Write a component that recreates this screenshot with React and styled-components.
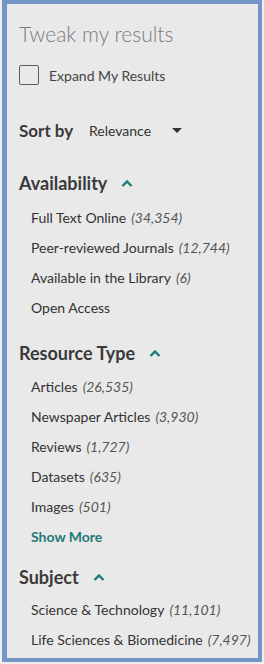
import React from 'react'
import styled, { createGlobalStyle } from 'styled-components'

const Global = createGlobalStyle`
  html, body {
    margin: 0;
    padding: 0;
    background: #efefef;
  }
  body {
    font-family: Lato, "Open Sans", "Liberation Sans", sans-serif;
  }
`

const Panel = styled.aside`
  box-sizing: border-box;
  width: 260px;
  height: 662px;
  margin-left: 2px;
  background: #e9e9e9;
  border: 4px solid #7396c4;
  border-left-width: 5px;
  padding: 17px 0 0 12px;
  overflow: hidden;
`

const Title = styled.h2`
  margin: 0;
  font-size: 21px;
  font-weight: 300;
  color: #7b7b7b;
  line-height: 26px;
`

const CheckRow = styled.label`
  display: flex;
  align-items: center;
  gap: 10px;
  margin-top: 18px;
  font-size: 14px;
  color: #444;
`

const Box = styled.span`
  box-sizing: border-box;
  width: 20px;
  height: 20px;
  border: 1px solid #5e5e5e;
  border-radius: 2px;
`

const SortRow = styled.div`
  display: flex;
  align-items: center;
  margin-top: 33px;
  height: 24px;
`

const SortLabel = styled.span`
  font-size: 17px;
  font-weight: 700;
  color: #3a3a3a;
  width: 70px;
`

const SortValue = styled.span`
  font-size: 14px;
  color: #333;
  width: 83px;
`

const Caret = styled.span`
  width: 0;
  height: 0;
  border-left: 5px solid transparent;
  border-right: 5px solid transparent;
  border-top: 5px solid #333;
`

const Section = styled.section`
  margin-top: ${p => p.$gap}px;
`

const Heading = styled.div`
  display: flex;
  align-items: center;
  gap: 14px;
  height: 24px;
  font-size: 18px;
  font-weight: 700;
  color: #3a3a3a;
`

const List = styled.ul`
  list-style: none;
  margin: ${p => p.$top}px 0 0;
  padding: 0 0 0 12px;
`

const Item = styled.li`
  height: 30px;
  display: flex;
  align-items: center;
  font-size: 14px;
  color: #333;
`

const Count = styled.span`
  font-style: italic;
  color: #555;
  margin-left: 5px;
`

const More = styled(Item)`
  color: #1f7a78;
  font-weight: 700;
`

const Chevron = () => (
  <svg width="12" height="9" viewBox="0 0 12 9">
    <path d="M1.5 7 L6 2.5 L10.5 7" fill="none" stroke="#1f7a78" strokeWidth="2.4" />
  </svg>
)

const facets = [
  {
    name: 'Availability',
    gap: 29,
    top: 7,
    items: [
      ['Full Text Online', '34,354'],
      ['Peer-reviewed Journals', '12,744'],
      ['Available in the Library', '6'],
      ['Open Access'],
    ],
  },
  {
    name: 'Resource Type',
    gap: 19,
    top: 6,
    more: true,
    items: [
      ['Articles', '26,535'],
      ['Newspaper Articles', '3,930'],
      ['Reviews', '1,727'],
      ['Datasets', '635'],
      ['Images', '501'],
    ],
  },
  {
    name: 'Subject',
    gap: 14,
    top: 5,
    items: [
      ['Science & Technology', '11,101'],
      ['Life Sciences & Biomedicine', '7,497'],
    ],
  },
]

const App = () => (
  <>
    <Global />
    <Panel>
      <Title>Tweak my results</Title>
      <CheckRow>
        <Box />
        Expand My Results
      </CheckRow>
      <SortRow>
        <SortLabel>Sort by</SortLabel>
        <SortValue>Relevance</SortValue>
        <Caret />
      </SortRow>
      {facets.map(f => (
        <Section key={f.name} $gap={f.gap}>
          <Heading>
            {f.name}
            <Chevron />
          </Heading>
          <List $top={f.top}>
            {f.items.map(([label, count]) => (
              <Item key={label}>
                {label}
                {count && <Count>({count})</Count>}
              </Item>
            ))}
            {f.more && <More>Show More</More>}
          </List>
        </Section>
      ))}
    </Panel>
  </>
)

export default App
